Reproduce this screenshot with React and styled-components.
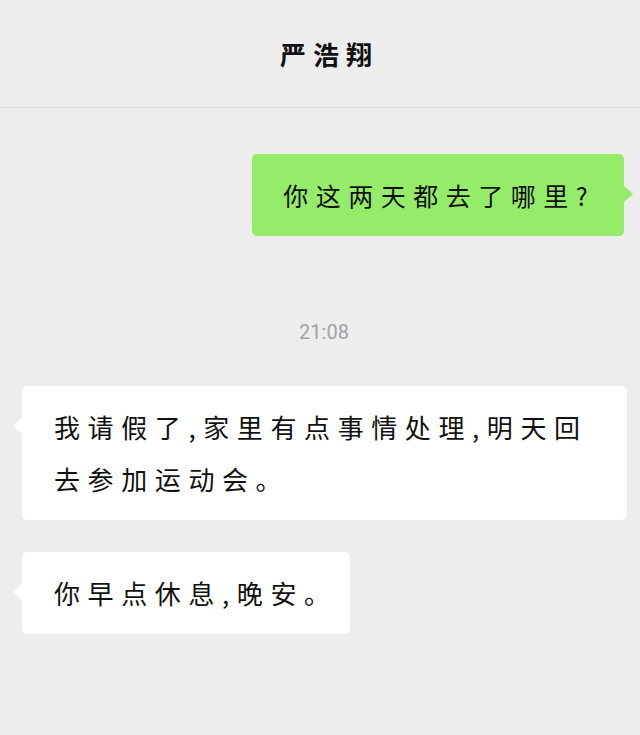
import React from "react";
import styled, { createGlobalStyle } from "styled-components";

const GlobalStyle = createGlobalStyle`
  html, body {
    margin: 0;
    padding: 0;
    background: #ededed;
  }
`;

const CJK = `"KaiTi", "STKaiti", "AR PL UKai CN", "Noto Sans CJK SC", sans-serif`;

const Page = styled.div`
  width: 640px;
  height: 735px;
  background: #ededed;
  font-family: ${CJK};
  overflow: hidden;
`;

const Header = styled.header`
  height: 107px;
  display: flex;
  align-items: center;
  justify-content: center;
  border-bottom: 1px solid #e0e0e0;
`;

const Title = styled.h1`
  margin: 0;
  font-size: 26px;
  font-weight: 700;
  letter-spacing: 7px;
  padding-left: 19px;
  color: #111;
`;

const Chat = styled.main`
  display: flex;
  flex-direction: column;
  padding-top: 46px;
`;

const Row = styled.div`
  display: flex;
  justify-content: ${(p) => (p.$mine ? "flex-end" : "flex-start")};
  padding: ${(p) => (p.$mine ? "0 16px 0 0" : "0 13px 0 22px")};
  margin-bottom: ${(p) => p.$gap || 0}px;
`;

const Bubble = styled.div`
  position: relative;
  max-width: 100%;
  box-sizing: border-box;
  padding: 15px ${(p) => (p.$mine ? "29px" : "12px")} 15px ${(p) => (p.$mine ? "31px" : "32px")};
  border-radius: 5px;
  background: ${(p) => (p.$mine ? "#95ec69" : "#ffffff")};
  color: #111;
  font-size: ${(p) => (p.$mine ? 25 : 26)}px;
  letter-spacing: ${(p) => (p.$mine ? 7.5 : 7.6)}px;
  line-height: 52px;

  &::after {
    content: "";
    position: absolute;
    top: 32px;
    ${(p) => (p.$mine ? "right: -9px;" : "left: -9px;")}
    border-top: 8px solid transparent;
    border-bottom: 8px solid transparent;
    ${(p) =>
      p.$mine
        ? "border-left: 9px solid #95ec69;"
        : "border-right: 9px solid #ffffff;"}
  }
`;

const Time = styled.div`
  text-align: center;
  font-family: "Roboto", "Liberation Sans", sans-serif;
  font-size: 20px;
  line-height: 24px;
  color: #a3a3a3;
  padding-left: 8px;
  margin: 84px 0 42px;
`;

export default function App() {
  return (
    <Page>
      <GlobalStyle />
      <Header>
        <Title>严浩翔</Title>
      </Header>
      <Chat>
        <Row $mine>
          <Bubble $mine>你这两天都去了哪里?</Bubble>
        </Row>
        <Time>21:08</Time>
        <Row $gap={32}>
          <Bubble>我请假了,家里有点事情处理,明天回去参加运动会。</Bubble>
        </Row>
        <Row>
          <Bubble>你早点休息,晚安。</Bubble>
        </Row>
      </Chat>
    </Page>
  );
}
